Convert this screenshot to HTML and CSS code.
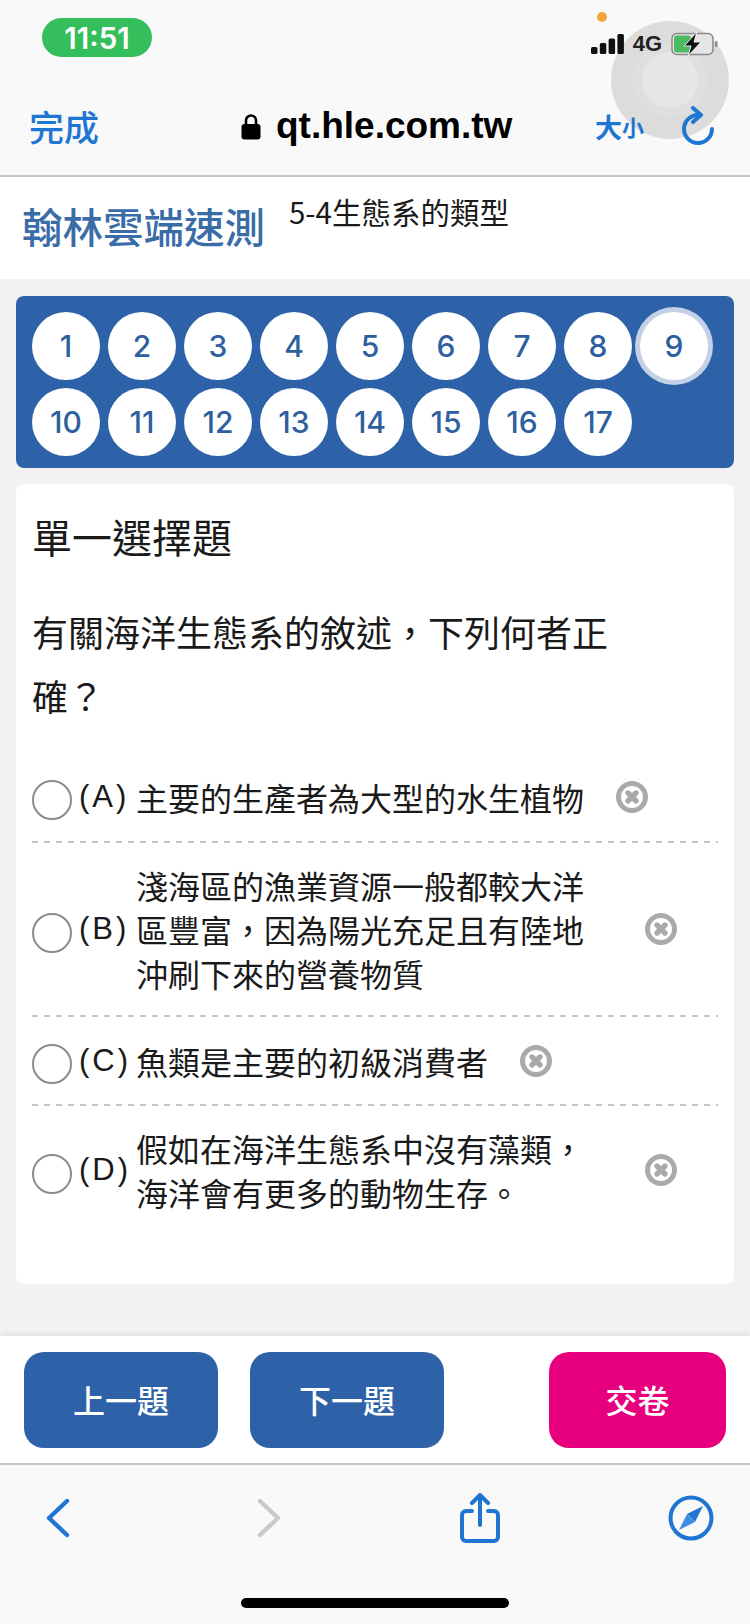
FILE: index.html
```html
<!DOCTYPE html>
<html lang="zh-Hant">
<head>
  <meta charset="UTF-8">
  <title>翰林雲端速測</title>
  <link rel="stylesheet" href="styles.css">
</head>
<body>
  <div class="phone">
    <!-- assistive touch button over the status bar -->
    <div class="touch"><div class="touch-ring"><div class="touch-core"></div></div></div>
    <div class="mic-dot"></div>

    <header class="chrome-top">
      <div class="status">
        <div class="clock">11:51</div>
        <div class="status-right">
          <svg width="33" height="20" viewBox="0 0 33 20">
            <rect x="0" y="13" width="6.5" height="7" rx="1.5" fill="#111"/>
            <rect x="8.8" y="9" width="6.5" height="11" rx="1.5" fill="#111"/>
            <rect x="17.6" y="4.5" width="6.5" height="15.5" rx="1.5" fill="#111"/>
            <rect x="26.4" y="0" width="6.5" height="20" rx="1.5" fill="#111"/>
          </svg>
          <span class="net">4G</span>
          <svg width="47" height="24" viewBox="0 0 47 24">
            <rect x="1" y="1.5" width="41" height="21" rx="5" fill="#e6e6e6" stroke="#8a8a8a" stroke-width="1.5"/>
            <rect x="3" y="3.5" width="17" height="17" rx="3" fill="#4cb963"/>
            <rect x="44" y="9" width="2.5" height="6" rx="1" fill="#8a8a8a"/>
            <path d="M26 0 L13 14 H20 L17 24 L30 10 H23 Z" fill="#111" stroke="#eee" stroke-width="1"/>
          </svg>
        </div>
      </div>
      <nav class="urlbar">
        <a class="done">完成</a>
        <div class="address">
          <svg width="20" height="27" viewBox="0 0 20 27">
            <path d="M5 12 V7.5 a5 5 0 0 1 10 0 V12" fill="none" stroke="#000" stroke-width="2.6"/>
            <rect x="0.5" y="11" width="19" height="15.5" rx="3" fill="#000"/>
          </svg>
          <span>qt.hle.com.tw</span>
        </div>
        <div class="url-tools">
          <span class="size"><b>大</b><small>小</small></span>
          <svg width="34" height="40" viewBox="0 0 34 40">
            <path d="M17 9 A14 14 0 1 0 31 23" fill="none" stroke="#1f76d2" stroke-width="4" stroke-linecap="round"/>
            <path d="M12 2 L20 9 L12 16" fill="none" stroke="#1f76d2" stroke-width="4" stroke-linecap="round" stroke-linejoin="round"/>
          </svg>
        </div>
      </nav>
    </header>

    <div class="site-head">
      <div class="brand">翰林雲端速測</div>
      <div class="paper">5-4生態系的類型</div>
    </div>

    <main class="content">
      <section class="numbers">
        <button class="num">1</button>
        <button class="num">2</button>
        <button class="num">3</button>
        <button class="num">4</button>
        <button class="num">5</button>
        <button class="num">6</button>
        <button class="num">7</button>
        <button class="num">8</button>
        <button class="num current">9</button>
        <button class="num">10</button>
        <button class="num">11</button>
        <button class="num">12</button>
        <button class="num">13</button>
        <button class="num">14</button>
        <button class="num">15</button>
        <button class="num">16</button>
        <button class="num">17</button>
      </section>

      <section class="card">
        <h2 class="qtype">單一選擇題</h2>
        <p class="question">有關海洋生態系的敘述，下列何者正確？</p>

        <div class="option">
          <span class="radio"></span>
          <span class="letter">(A)</span>
          <span class="opt-text">主要的生產者為大型的水生植物</span>
          <svg class="strike" viewBox="0 0 32 32"><use href="#x-circle"/></svg>
        </div>
        <div class="option">
          <span class="radio"></span>
          <span class="letter">(B)</span>
          <span class="opt-text wide">淺海區的漁業資源一般都較大洋區豐富，因為陽光充足且有陸地沖刷下來的營養物質</span>
          <svg class="strike far" viewBox="0 0 32 32"><use href="#x-circle"/></svg>
        </div>
        <div class="option">
          <span class="radio"></span>
          <span class="letter">(C)</span>
          <span class="opt-text">魚類是主要的初級消費者</span>
          <svg class="strike" viewBox="0 0 32 32"><use href="#x-circle"/></svg>
        </div>
        <div class="option last">
          <span class="radio"></span>
          <span class="letter">(D)</span>
          <span class="opt-text wide">假如在海洋生態系中沒有藻類，海洋會有更多的動物生存。</span>
          <svg class="strike far" viewBox="0 0 32 32"><use href="#x-circle"/></svg>
        </div>
      </section>
    </main>

    <div class="actions">
      <button class="act">上一題</button>
      <button class="act">下一題</button>
      <button class="act submit">交卷</button>
    </div>

    <footer class="chrome-bottom">
      <div class="tools">
        <svg width="26" height="40" viewBox="0 0 26 40"><path d="M22 3 L4 20 L22 37" fill="none" stroke="#1f76d2" stroke-width="4.4" stroke-linecap="round" stroke-linejoin="round"/></svg>
        <svg width="26" height="40" viewBox="0 0 26 40"><path d="M4 3 L22 20 L4 37" fill="none" stroke="#c9c9c9" stroke-width="4.4" stroke-linecap="round" stroke-linejoin="round"/></svg>
        <svg width="40" height="50" viewBox="0 0 40 50">
          <path d="M12 18 H6 a4 4 0 0 0 -4 4 V44 a4 4 0 0 0 4 4 H34 a4 4 0 0 0 4 -4 V22 a4 4 0 0 0 -4 -4 H28" fill="none" stroke="#1f76d2" stroke-width="4" stroke-linecap="round"/>
          <path d="M20 32 V3 M12 10 L20 2 L28 10" fill="none" stroke="#1f76d2" stroke-width="4" stroke-linecap="round" stroke-linejoin="round"/>
        </svg>
        <svg width="46" height="46" viewBox="0 0 46 46">
          <circle cx="23" cy="23" r="20.5" fill="none" stroke="#1f76d2" stroke-width="4"/>
          <path d="M35 11 L27 27 L19 19 Z" fill="#1f76d2"/>
          <path d="M11 35 L19 19 L27 27 Z" fill="#3d8fe4"/>
        </svg>
      </div>
      <div class="home-bar"></div>
    </footer>
  </div>

  <!-- shared glyph for the strike-out buttons -->
  <svg width="0" height="0" class="defs">
    <symbol id="x-circle" viewBox="0 0 32 32">
      <circle cx="16" cy="16" r="13.5" fill="#fff" stroke="#aaaaaa" stroke-width="5"/>
      <path d="M12 12 L20 20 M20 12 L12 20" stroke="#aaaaaa" stroke-width="5.4" stroke-linecap="round"/>
    </symbol>
  </svg>
</body>
</html>
```

FILE: styles.css
```css
* {
  box-sizing: border-box;
}

html, body {
  margin: 0;
  padding: 0;
}

body {
  font-family: "Noto Sans CJK TC", "Liberation Sans", sans-serif;
  color: #1a1a1a;
  background-color: #f2f2f2;
}

.defs {
  position: absolute;
}

.phone {
  position: relative;
  width: 750px;
  height: 1624px;
  display: flex;
  flex-direction: column;
  overflow: hidden;
}

/* top browser bar */
.chrome-top {
  height: 177px;
  background-color: #f9f9f9;
  border-bottom: 2px solid #c6c6c6;
  padding: 18px 0 0 0;
}

.status {
  height: 75px;
  display: flex;
  justify-content: space-between;
  padding: 0 32px 0 42px;
}

.clock {
  width: 110px;
  height: 39px;
  border-radius: 20px;
  background-color: #35bf5c;
  color: #fff;
  font-family: Inter, "Liberation Sans", sans-serif;
  font-weight: 600;
  font-size: 29.5px;
  line-height: 40px;
  text-align: center;
}

.status-right {
  position: relative;
  display: flex;
  align-items: center;
  gap: 9px;
  height: 24px;
  margin-top: 14px;
}

.net {
  font-family: "Liberation Sans", sans-serif;
  font-weight: bold;
  font-size: 22px;
  line-height: 24px;
  color: #222;
}

.urlbar {
  display: flex;
  align-items: center;
  height: 66px;
  padding-left: 29px;
}

.done {
  font-size: 35px;
  font-weight: 500;
  line-height: 66px;
  color: #1f76d2;
  width: 212px;
}

.address {
  display: flex;
  align-items: center;
  gap: 15px;
  width: 354px;
}

.address span {
  font-family: "Liberation Sans", sans-serif;
  font-weight: bold;
  font-size: 37px;
  color: #000;
}

.url-tools {
  display: flex;
  align-items: center;
  gap: 36px;
  position: relative;
}

.size {
  color: #1f76d2;
  display: flex;
  align-items: center;
  width: 50px;
}

.size b {
  font-size: 27px;
}

.size small {
  font-size: 22px;
  font-weight: bold;
}

/* floating assistive touch */
.touch {
  position: absolute;
  left: 611px;
  top: 21px;
  width: 118px;
  height: 118px;
  border-radius: 50%;
  background-color: #dcdcdc;
  display: flex;
  align-items: center;
  justify-content: center;
}

.touch-ring {
  width: 74px;
  height: 74px;
  border-radius: 50%;
  background-color: #dfdfdf;
  display: flex;
  align-items: center;
  justify-content: center;
}

.touch-core {
  width: 56px;
  height: 56px;
  border-radius: 50%;
  background-color: #e6e6e6;
}

.mic-dot {
  position: absolute;
  left: 597px;
  top: 12px;
  width: 10px;
  height: 10px;
  border-radius: 50%;
  background-color: #f5a33c;
}

/* site header */
.site-head {
  height: 102px;
  background-color: #fff;
  display: flex;
  padding-left: 22px;
}

.brand {
  font-size: 40.5px;
  font-weight: 500;
  line-height: 50px;
  margin-top: 24px;
  color: #3a6ca8;
  width: 267px;
  white-space: nowrap;
}

.paper {
  font-size: 29.5px;
  line-height: 36px;
  margin-top: 16px;
}

/* question area */
.content {
  flex: 1;
  padding: 17px 16px 0 16px;
}

.numbers {
  height: 172px;
  background-color: #2e62a8;
  border-radius: 8px;
  padding: 16px;
  display: flex;
  flex-wrap: wrap;
  align-content: flex-start;
  gap: 8px;
}

.num {
  width: 68px;
  height: 68px;
  padding: 0;
  border: none;
  border-radius: 50%;
  background-color: #fff;
  color: #2e5f9e;
  font-family: Inter, "Liberation Sans", sans-serif;
  font-size: 30px;
  font-weight: 500;
}

.num.current {
  box-shadow: 0 0 0 5px #c3d0e6;
}

.card {
  height: 800px;
  margin-top: 16px;
  background-color: #fff;
  border-radius: 8px;
  padding: 26px 16px 0 16px;
}

.qtype {
  margin: 0;
  font-size: 40px;
  font-weight: normal;
  line-height: 52px;
}

.question {
  margin: 37px 0 0 0;
  width: 590px;
  font-size: 36px;
  line-height: 64px;
}

.option {
  display: flex;
  align-items: center;
  padding: 20px 0 22px 0;
  background-image: repeating-linear-gradient(to right, #c4c4c4 0, #c4c4c4 6px, transparent 6px, transparent 12px);
  background-size: 100% 2px;
  background-position: left bottom;
  background-repeat: no-repeat;
}

.option:first-of-type {
  margin-top: 26px;
  padding-bottom: 23px;
}

.option.last {
  background-image: none;
}

.radio {
  flex: none;
  width: 40px;
  height: 40px;
  border-radius: 50%;
  border: 2px solid #8c8c8c;
  margin-top: 7px;
}

.letter {
  flex: none;
  width: 57px;
  margin-left: 7px;
  font-family: "Liberation Sans", sans-serif;
  font-size: 31px;
  letter-spacing: 3px;
}

.opt-text {
  font-size: 32px;
  line-height: 44px;
}

.opt-text.wide {
  width: 448px;
  flex: none;
}

.strike {
  flex: none;
  width: 32px;
  height: 32px;
  margin-left: 32px;
}

.strike.far {
  margin-left: 61px;
}

/* bottom buttons */
.actions {
  height: 127px;
  background-color: #fff;
  box-shadow: 0 -2px 6px rgba(0, 0, 0, 0.08);
  display: flex;
  padding: 16px 24px 0 24px;
  gap: 32px;
}

.act {
  width: 194px;
  height: 96px;
  padding-bottom: 4px;
  border: none;
  border-radius: 20px;
  background-color: #2e62a8;
  color: #fff;
  font-family: "Noto Sans CJK TC", sans-serif;
  font-size: 32px;
  font-weight: 500;
}

.act.submit {
  width: 177px;
  margin-left: auto;
  background-color: #e6007e;
}

/* bottom browser bar */
.chrome-bottom {
  height: 161px;
  background-color: #f9f9f9;
  border-top: 2px solid #c6c6c6;
  position: relative;
}

.tools {
  display: grid;
  grid-template-columns: repeat(4, 100px);
  column-gap: 111px;
  justify-items: center;
  align-items: center;
  height: 100px;
  padding: 6px 0 0 8px;
}

.home-bar {
  position: absolute;
  left: 241px;
  bottom: 16px;
  width: 268px;
  height: 10px;
  border-radius: 5px;
  background-color: #000;
}
```
